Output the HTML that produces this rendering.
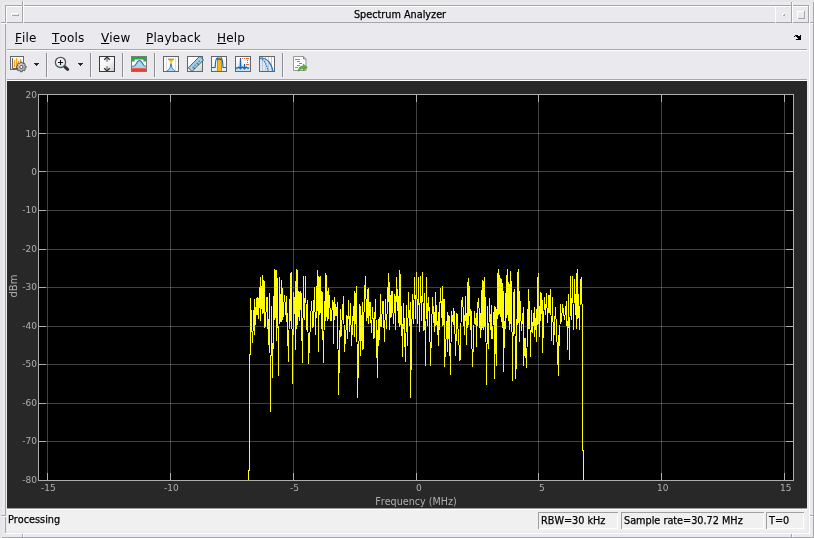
<!DOCTYPE html>
<html><head><meta charset="utf-8"><title>Spectrum Analyzer</title>
<style>
html,body{margin:0;padding:0;background:#eae9ee;overflow:hidden}
#w{position:relative;width:814px;height:538px;background:#eae9ee;overflow:hidden;font-family:"DejaVu Sans","Liberation Sans",sans-serif;font-kerning:none}
#w div{position:absolute}
#w svg{position:absolute}
.t{white-space:nowrap;will-change:transform}
.b{-webkit-text-stroke:0.25px #000}
.lab{font-size:9px;line-height:12px;color:#afafaf}
u{text-decoration:underline;text-underline-offset:1px}
</style></head><body><div id="w">
<div style="left:0px;top:0px;width:814px;height:2px;background:#e6e6e6;"></div><div style="left:0px;top:0px;width:2px;height:538px;background:#e6e6e6;"></div><div style="left:2px;top:537px;width:812px;height:1px;background:#a6a6a6;"></div><div style="left:813px;top:2px;width:1px;height:536px;background:#a6a6a6;"></div><div style="left:5px;top:5px;width:804px;height:1px;background:#a6a6a6;"></div><div style="left:5px;top:5px;width:1px;height:528px;background:#a6a6a6;"></div><div style="left:5px;top:533px;width:805px;height:1px;background:#ffffff;"></div><div style="left:809px;top:6px;width:1px;height:528px;background:#ffffff;"></div><div style="left:22px;top:1px;width:1px;height:5px;background:#a6a6a6;"></div><div style="left:23px;top:1px;width:1px;height:5px;background:#ffffff;"></div><div style="left:1px;top:22px;width:5px;height:1px;background:#a6a6a6;"></div><div style="left:1px;top:23px;width:5px;height:1px;background:#ffffff;"></div><div style="left:791px;top:2px;width:1px;height:4px;background:#a6a6a6;"></div><div style="left:792px;top:2px;width:1px;height:4px;background:#ffffff;"></div><div style="left:810px;top:22px;width:3px;height:1px;background:#a6a6a6;"></div><div style="left:810px;top:23px;width:3px;height:1px;background:#ffffff;"></div><div style="left:1px;top:515px;width:5px;height:1px;background:#a6a6a6;"></div><div style="left:1px;top:516px;width:5px;height:1px;background:#ffffff;"></div><div style="left:22px;top:534px;width:1px;height:3px;background:#a6a6a6;"></div><div style="left:23px;top:534px;width:1px;height:3px;background:#ffffff;"></div><div style="left:810px;top:515px;width:3px;height:1px;background:#a6a6a6;"></div><div style="left:810px;top:516px;width:3px;height:1px;background:#ffffff;"></div><div style="left:791px;top:534px;width:1px;height:3px;background:#a6a6a6;"></div><div style="left:792px;top:534px;width:1px;height:3px;background:#ffffff;"></div><div style="left:6px;top:6px;width:16px;height:1px;background:#ffffff;"></div><div style="left:6px;top:6px;width:1px;height:16px;background:#ffffff;"></div><div style="left:22px;top:6px;width:1px;height:17px;background:#a6a6a6;"></div><div style="left:7px;top:22px;width:16px;height:1px;background:#a6a6a6;"></div><div style="left:11px;top:13px;width:8px;height:1px;background:#ffffff;"></div><div style="left:11px;top:13px;width:1px;height:3px;background:#ffffff;"></div><div style="left:12px;top:15px;width:7px;height:1px;background:#a6a6a6;"></div><div style="left:18px;top:14px;width:1px;height:2px;background:#a6a6a6;"></div><div style="left:23px;top:6px;width:752px;height:1px;background:#ffffff;"></div><div style="left:23px;top:6px;width:1px;height:16px;background:#ffffff;"></div><div style="left:24px;top:22px;width:751px;height:1px;background:#a6a6a6;"></div><div style="left:775px;top:6px;width:16px;height:1px;background:#ffffff;"></div><div style="left:775px;top:6px;width:1px;height:16px;background:#ffffff;"></div><div style="left:776px;top:22px;width:16px;height:1px;background:#a6a6a6;"></div><div style="left:791px;top:6px;width:1px;height:17px;background:#a6a6a6;"></div><div style="left:782px;top:13px;width:3px;height:1px;background:#ffffff;"></div><div style="left:782px;top:13px;width:1px;height:3px;background:#ffffff;"></div><div style="left:783px;top:15px;width:2px;height:1px;background:#a6a6a6;"></div><div style="left:784px;top:14px;width:1px;height:2px;background:#a6a6a6;"></div><div style="left:792px;top:6px;width:16px;height:1px;background:#ffffff;"></div><div style="left:792px;top:6px;width:1px;height:16px;background:#ffffff;"></div><div style="left:793px;top:22px;width:16px;height:1px;background:#a6a6a6;"></div><div style="left:808px;top:6px;width:1px;height:17px;background:#a6a6a6;"></div><div style="left:797px;top:11px;width:7px;height:1px;background:#ffffff;"></div><div style="left:797px;top:11px;width:1px;height:8px;background:#ffffff;"></div><div style="left:798px;top:18px;width:7px;height:1px;background:#a6a6a6;"></div><div style="left:804px;top:11px;width:1px;height:8px;background:#a6a6a6;"></div><div class="t b" style="left:24.5px;top:6.6px;width:750px;height:16px;line-height:16px;text-align:center;font-size:9.7px;color:#000">Spectrum Analyzer</div><div class="t" style="left:15px;top:30px;font-size:12px;line-height:16px;letter-spacing:0.15px;color:#000"><u>F</u>ile</div><div class="t" style="left:52px;top:30px;font-size:12px;line-height:16px;letter-spacing:0.15px;color:#000"><u>T</u>ools</div><div class="t" style="left:101px;top:30px;font-size:12px;line-height:16px;letter-spacing:0.15px;color:#000"><u>V</u>iew</div><div class="t" style="left:146px;top:30px;font-size:12px;line-height:16px;letter-spacing:0.15px;color:#000"><u>P</u>layback</div><div class="t" style="left:217px;top:30px;font-size:12px;line-height:16px;letter-spacing:0.15px;color:#000"><u>H</u>elp</div><div style="left:7px;top:49px;width:800px;height:1px;background:#a8a8ac;"></div><div style="left:7px;top:50px;width:800px;height:1px;background:#ffffff;"></div><div style="left:795px;top:35px;width:3px;height:1px;background:#000;"></div><div style="left:800px;top:35px;width:1px;height:1px;background:#000;"></div><div style="left:794px;top:36px;width:1px;height:1px;background:#000;"></div><div style="left:796px;top:36px;width:5px;height:1px;background:#000;"></div><div style="left:797px;top:37px;width:4px;height:1px;background:#000;"></div><div style="left:798px;top:38px;width:3px;height:1px;background:#000;"></div><div style="left:796px;top:39px;width:5px;height:1px;background:#000;"></div><div style="left:7px;top:79px;width:800px;height:1px;background:#a8a8ac;"></div><div style="left:7px;top:80px;width:800px;height:1px;background:#ffffff;"></div><div style="left:46px;top:53px;width:1px;height:24px;background:#8e8e90;"></div><div style="left:47px;top:53px;width:1px;height:24px;background:#f6f5f8;"></div><div style="left:90px;top:53px;width:1px;height:24px;background:#8e8e90;"></div><div style="left:91px;top:53px;width:1px;height:24px;background:#f6f5f8;"></div><div style="left:122px;top:53px;width:1px;height:24px;background:#8e8e90;"></div><div style="left:123px;top:53px;width:1px;height:24px;background:#f6f5f8;"></div><div style="left:154px;top:53px;width:1px;height:24px;background:#8e8e90;"></div><div style="left:155px;top:53px;width:1px;height:24px;background:#f6f5f8;"></div><div style="left:282px;top:53px;width:1px;height:24px;background:#8e8e90;"></div><div style="left:283px;top:53px;width:1px;height:24px;background:#f6f5f8;"></div><div style="left:34px;top:63px;width:5px;height:1px;background:#2a2a2a;"></div><div style="left:35px;top:64px;width:3px;height:1px;background:#2a2a2a;"></div><div style="left:36px;top:65px;width:1px;height:1px;background:#2a2a2a;"></div><div style="left:78px;top:63px;width:5px;height:1px;background:#2a2a2a;"></div><div style="left:79px;top:64px;width:3px;height:1px;background:#2a2a2a;"></div><div style="left:80px;top:65px;width:1px;height:1px;background:#2a2a2a;"></div><svg style="left:0;top:0" width="814" height="82" viewBox="0 0 814 82">
<defs>
<linearGradient id="gw" x1="0" y1="0" x2="1" y2="1"><stop offset="0" stop-color="#ffffff"/><stop offset="0.55" stop-color="#f4f4f4"/><stop offset="1" stop-color="#c9c9c9"/></linearGradient>
<linearGradient id="gb" x1="0" y1="0" x2="0" y2="1"><stop offset="0" stop-color="#ffffff"/><stop offset="1" stop-color="#dcebf5"/></linearGradient>
<radialGradient id="gg" cx="0.4" cy="0.35" r="0.7"><stop offset="0" stop-color="#dcdcdc"/><stop offset="1" stop-color="#9a9a9a"/></radialGradient>
<radialGradient id="gl" cx="0.4" cy="0.35" r="0.7"><stop offset="0" stop-color="#ffffff"/><stop offset="1" stop-color="#cfe6f2"/></radialGradient>
</defs>
<!-- icon1: scope config -->
<g>
<rect x="10.5" y="56.5" width="13" height="13" fill="url(#gb)" stroke="#666" stroke-width="1"/>
<path d="M12.5 58v10.5h9" fill="none" stroke="#666" stroke-width="1"/>
<g stroke="#f9a11b" stroke-width="1.2"><path d="M14.6 60v7M16.6 58v9M18.6 61v4M20.6 59v4"/></g>
<g transform="translate(21.3,67)">
<path d="M-0.84,-4.83 L0.84,-4.83 L0.93,-3.89 L2.09,-3.41 L2.82,-4.01 L4.01,-2.82 L3.41,-2.09 L3.89,-0.93 L4.83,-0.84 L4.83,0.84 L3.89,0.93 L3.41,2.09 L4.01,2.82 L2.82,4.01 L2.09,3.41 L0.93,3.89 L0.84,4.83 L-0.84,4.83 L-0.93,3.89 L-2.09,3.41 L-2.82,4.01 L-4.01,2.82 L-3.41,2.09 L-3.89,0.93 L-4.83,0.84 L-4.83,-0.84 L-3.89,-0.93 L-3.41,-2.09 L-4.01,-2.82 L-2.82,-4.01 L-2.09,-3.41 L-0.93,-3.89z" fill="url(#gg)" stroke="#444" stroke-width="0.8" stroke-linejoin="round"/>
<circle r="1.6" fill="#fff" stroke="#484848" stroke-width="0.9"/>
</g>
</g>
<!-- icon2: zoom -->
<g>
<path d="M64.6 66.6l3 2.8" stroke="#333" stroke-width="3" stroke-linecap="round"/>
<circle cx="60.5" cy="62.4" r="5.1" fill="url(#gl)" stroke="#555" stroke-width="1.3"/>
<path d="M58 62.5h5M60.5 60v5" stroke="#111" stroke-width="1.1"/>
</g>
<!-- icon3: autoscale -->
<g>
<rect x="99.5" y="56.5" width="15" height="15" fill="url(#gw)" stroke="#3c3c3c" stroke-width="1"/>
<path d="M104.2 59.8l2.8-2.6 2.8 2.6" fill="none" stroke="#333" stroke-width="1.3"/>
<path d="M107 58.5v3.2" stroke="#888" stroke-width="1.6"/>
<path d="M104.2 68.2l2.8 2.6 2.8-2.6" fill="none" stroke="#333" stroke-width="1.3"/>
<path d="M107 66.3v3.2" stroke="#888" stroke-width="1.6"/>
</g>
<!-- icon4: spectral mask -->
<g>
<rect x="131.5" y="56.5" width="15" height="15" fill="#fff" stroke="#7a7a7a" stroke-width="1"/>
<path d="M132 57h14v4.5h-2.6v-2h-8.8v2H132z" fill="#1fae3b"/>
<path d="M132 66.3h1.5c2.8,0 3,-5.800 6,-5.800s3.200,5.800 6,5.800h.5V68H132z" fill="#a9d9ea"/>
<path d="M132 66.3h1.5c2.8,0 3,-5.800 6,-5.800s3.200,5.800 6,5.800h.5" fill="none" stroke="#2a6db5" stroke-width="1.1"/>
<rect x="132" y="66.8" width="14" height="1.4" fill="#9fd4ea"/>
<rect x="132" y="68.2" width="14" height="2.8" fill="#e8402a"/>
</g>
<!-- icon5: peak finder -->
<g>
<rect x="163.5" y="56.5" width="15" height="15" fill="#fff" stroke="#666" stroke-width="1"/>
<path d="M166.5 57v14M175.5 57v14" stroke="#dedede" stroke-width="1"/>
<path d="M167 71c2.5,-1.5 3.3,-3 4,-7.5c.7,4.5 1.5,6 4,7.5z" fill="#b7dcef"/>
<path d="M167 71c2.5,-1.5 3.3,-3 4,-7.5c.7,4.500 1.500,6 4,7.500" fill="none" stroke="#2a6db5" stroke-width="1"/>
<path d="M168.200 59.300h5.600L171 63.500z" fill="#f6c414"/>
<path d="M168 59.200h6" stroke="#b06f1c" stroke-width="1"/>
</g>
<!-- icon6: ruler -->
<g>
<rect x="187.500" y="56.500" width="15" height="15" fill="url(#gw)" stroke="#666" stroke-width="1"/>
<path d="M188.300 67.800L199.800 56.300L203.500 60L192 71.500z" fill="#9dd2f1" stroke="#333" stroke-width="0.8"/>
<g fill="#222"><rect x="192.600" y="66.700" width="1" height="1"/><rect x="194.600" y="64.700" width="1" height="1"/><rect x="196.600" y="62.700" width="1" height="1"/><rect x="198.600" y="60.700" width="1" height="1"/><rect x="193.700" y="67.700" width="1" height="1"/><rect x="197.700" y="63.700" width="1" height="1"/></g>
</g>
<!-- icon7: channel measurements -->
<g>
<rect x="211.500" y="56.500" width="15" height="15" fill="url(#gb)" stroke="#666" stroke-width="1"/>
<rect x="217" y="57" width="5" height="14" fill="#fdb913"/>
<path d="M217.500 57v14M221.500 57v14" stroke="#e5801d" stroke-width="1"/>
<path d="M212 67.500h3.200c.3,-6 .3,-8 1.500,-9l1.200,1.200 1.200,-1.200 1.200,1.200 1.200,-1.200c1.200,1 1.200,3 1.500,9H226" fill="none" stroke="#2364ad" stroke-width="1.100"/>
</g>
<!-- icon8: distortion -->
<g>
<rect x="235.500" y="56.500" width="15" height="15" fill="url(#gb)" stroke="#666" stroke-width="1"/>
<path d="M236 67.500l1,1 1.500,-1.500 1.500,1.500 .5,-10.500 .5,10.500 1.500,-1.500 1.500,1.500 .5,-4.500 .5,4.500 1.500,-1.500 1.500,1.500 1,-1V71H236z" fill="#c5e2f0" stroke="none"/>
<path d="M236 67.500l1,1 1.500,-1.500 1.500,1.500 .5,-10.500 .5,10.500 1.500,-1.500 1.500,1.500 .5,-4.500 .5,4.500 1.500,-1.500 1.500,1.500 1,-1" fill="none" stroke="#2364ad" stroke-width="1.100"/>
<g fill="#d0622a"><rect x="242" y="58" width="1" height="1"/><rect x="244" y="58" width="1" height="1"/><rect x="246" y="58" width="3" height="1"/><rect x="247" y="60" width="1" height="1"/><rect x="247" y="62" width="1" height="1"/><rect x="246" y="64" width="3" height="1"/></g>
</g>
<!-- icon9: ccdf -->
<g>
<rect x="259.500" y="56.500" width="15" height="15" fill="#fff" stroke="#666" stroke-width="1"/>
<path d="M260 58h2.500c5,1 9,6 10.500,13H260z" fill="#d6e9f8"/>
<path d="M262.500 57v14M265.500 57v14M268.500 57v14M271.500 57v14" stroke="#c8c8c8" stroke-width="1"/>
<path d="M260 58h2.500c5,1 9,6 10.500,13" fill="none" stroke="#1f6fc0" stroke-width="1.200"/>
<path d="M260 58.500c4,0.500 7,6 8,12.500" fill="none" stroke="#1f6fc0" stroke-width="1.200" stroke-dasharray="1.500 1"/>
</g>
<!-- icon10: export -->
<g>
<path d="M293.500 56.500h10l2.500 2.500v11.500h-12.500z" fill="#fdfdfd" stroke="#9a9a9a" stroke-width="1"/>
<path d="M303.500 56.500v2.500h2.500" fill="none" stroke="#8a8a8a" stroke-width="1"/>
<g stroke="#8a8a8a" stroke-width="1"><path d="M295 59.500h5M297 61.500h3M299 63.500h3M297 65.500h3M295 67.500h3"/></g>
<path d="M298.300 71.300c0,-3.500 2,-5.300 5,-5.300v-1.800l4 3.200-4 3.200v-1.800c-2,0 -3.500,.5 -5,2.500z" fill="#5db12f" stroke="#3c8a1e" stroke-width="0.600"/>
</g>
</svg>
<div style="left:7px;top:81px;width:800px;height:427px;background:#282828;"></div><svg style="position:absolute;left:0;top:0" width="814" height="538" viewBox="0 0 814 538" shape-rendering="crispEdges">
<rect x="38" y="94" width="756" height="387" fill="#000"/>
<path d="M248.5,480 L248.5,470 L249.5,470 L249.5,354 L250.5,354 L250.5,298 L252.5,342.5 L254.5,299 L254.5,335 L256.5,298 L257,315 L258,297.5 L258.5,318.5 L260.5,277 L260.5,321 L262.5,275 L263,313.5 L264,280 L265,327.5 L267,297 L268.5,345 L269.5,293 L270.5,411.5 L271.5,306 L272.5,377.5 L274.5,269 L275,319.5 L276,270 L276.5,341 L277.5,278.5 L278.5,376 L279.5,277 L280,322.5 L281.5,280 L282,322 L282.5,288 L283,317.5 L284.5,295 L286.5,321.5 L286.5,296 L288.5,361.5 L289.5,299 L290.5,320.5 L291,273 L291.5,272.5 L292.5,383.5 L293.5,292 L294.5,314 L295.5,281 L295.5,350 L296.5,269 L297,328.5 L297.5,270 L298.5,316.5 L299,291 L299.5,320.5 L301,291 L301.5,340.5 L302,321.5 L302.5,363 L303.5,276.5 L304.5,320 L305.5,276 L306.5,329.5 L307.5,300 L308.5,364 L311.5,301 L313,328 L314.5,287 L315.5,335 L317.5,270 L318.5,351.5 L319,276.5 L320,314.5 L320.5,276 L321.5,328.5 L322,291 L323.5,363 L324.5,301.5 L325,323.5 L325.5,273.5 L326,319.5 L326.5,275 L328,321 L328.5,288 L331,321 L333,300 L333.5,344 L334.5,297 L336,316 L337.5,302 L338.5,395 L340.5,309 L341,336.5 L343.5,296 L344.5,351.5 L347,315.5 L347.5,339 L348.5,300 L349.5,331.5 L350.5,303 L351.5,345.5 L353.5,306 L354.5,336.5 L355,291 L355.5,323.5 L356.5,286 L357.5,397.5 L360,304 L360.5,355.5 L362.5,302 L363,349.5 L364.5,294.5 L365.5,276 L366.5,320.5 L367.5,289 L368,318 L368.5,288 L368.5,323.5 L370,302 L371.5,333 L372.5,307 L374,339 L375.5,299 L377.5,377.5 L378,330.5 L378.5,345.5 L379,319 L379.5,339.5 L380.5,294 L381,327 L383,301 L384.5,341.5 L385.5,299.5 L386.5,328.5 L388.5,273.5 L389.5,330 L389.5,282.5 L391,318 L392,291 L393.5,323.5 L395,294 L395.5,329.5 L396.5,277 L398.5,322.5 L399.5,270 L400,327 L400.5,274.5 L401.5,335.5 L402,322.5 L402.5,356.5 L403.5,303 L405.5,361.5 L406.5,305.5 L407.5,345.5 L408.5,292 L409.5,325.5 L410.5,302 L410.5,397.5 L412.5,294.5 L413.5,323.5 L414.5,277 L415.5,318.5 L416.5,272 L417.5,324 L418.5,277 L419.5,331.5 L420.5,276 L421.5,321 L422.5,272 L423.5,331 L424.5,293 L425.5,366 L426.5,277 L427.5,325.5 L428.5,297.5 L429.5,316 L430.5,366 L432.5,297.5 L434.5,331.5 L435.5,292 L436,326 L436.5,305 L437.5,335 L438.5,312 L438.5,345.5 L440.5,288 L441.5,317.5 L442.5,286 L443,325.5 L444,299.5 L444.5,367 L447.5,312 L447.5,351.5 L449,315.5 L450.5,375 L451.5,311 L452.5,321.5 L453.5,308.5 L454,324.5 L454.5,311 L455.5,355.5 L457,313.5 L460,360.5 L461.5,304 L462.5,297 L464.5,335 L465.5,296 L466.5,345 L467.5,282 L468,327.5 L468.5,278 L469,317 L469.5,286 L470.5,329.5 L471,310 L472.5,367 L474.5,311 L475.5,325 L476.5,313.5 L476.5,346.5 L477.5,306.5 L478.5,298 L480.5,337.5 L481.5,290.5 L482,329.5 L483,280 L484,329.5 L484.5,277 L485,320.5 L485.5,297 L486.5,385 L487.5,306 L488.5,349 L489.5,298 L490.5,329.5 L491.5,305 L492,339 L494.5,306 L494.5,378.5 L496,307.5 L496.5,366 L497.5,277 L498.5,269 L499,315 L499.5,275.5 L500.5,316.5 L501,278.5 L502,321.5 L502.5,283 L503.5,372 L503.5,291 L504.5,347.5 L506.5,275 L507,317.5 L507.5,269 L508.5,320.5 L509,282 L509.5,330 L510.5,271 L511,323.5 L511.5,281.5 L512.5,380.5 L513.5,295 L514.5,289 L515.5,378.5 L516,339.5 L516.5,368.5 L517.5,272 L518,324.5 L518.5,269 L519.5,341.5 L519.5,291 L521.5,330.5 L523.5,307 L523.5,366 L525,338 L526.5,367.5 L528.5,289 L529,328.5 L529.5,301 L530.5,356.5 L531.5,310 L532.5,332.5 L534.5,307 L534.5,336.5 L535.5,318.5 L536.5,341.5 L537.5,277.5 L538,324.5 L538.5,273.5 L539.5,336.5 L541,292 L541.5,313.5 L542,300 L542.5,352.5 L544.5,297 L545.5,315 L546.5,293 L547.5,322.5 L549,295 L550,313 L550.5,289 L551.5,340.5 L552.5,297 L553.5,345 L555.5,307 L558.5,376 L559,335.5 L559.5,345.5 L560.5,304 L561.5,321.5 L562.5,304.5 L564.5,319.5 L566.5,301 L567.5,349.5 L568.5,294.5 L569.5,360 L570.5,276 L571.5,320 L572.5,276 L573.5,329.5 L574.5,279.5 L575.5,315 L576.5,273.5 L576.5,328.5 L577.5,269 L578,319 L578.5,294.5 L579.5,330 L580.5,282 L581.5,277 L582.5,329 L582.5,450 L583.5,450 L583.5,480" fill="none" stroke="#ffff00" stroke-width="1" stroke-linejoin="miter" shape-rendering="crispEdges"/>
<rect x="47" y="94" width="1" height="386" fill="rgba(175,175,175,0.37)"/>
<rect x="170" y="94" width="1" height="386" fill="rgba(175,175,175,0.37)"/>
<rect x="293" y="94" width="1" height="386" fill="rgba(175,175,175,0.37)"/>
<rect x="416" y="94" width="1" height="386" fill="rgba(175,175,175,0.37)"/>
<rect x="538" y="94" width="1" height="386" fill="rgba(175,175,175,0.37)"/>
<rect x="661" y="94" width="1" height="386" fill="rgba(175,175,175,0.37)"/>
<rect x="784" y="94" width="1" height="386" fill="rgba(175,175,175,0.37)"/>
<rect x="38" y="133" width="755" height="1" fill="rgba(175,175,175,0.37)"/>
<rect x="38" y="171" width="755" height="1" fill="rgba(175,175,175,0.37)"/>
<rect x="38" y="210" width="755" height="1" fill="rgba(175,175,175,0.37)"/>
<rect x="38" y="249" width="755" height="1" fill="rgba(175,175,175,0.37)"/>
<rect x="38" y="287" width="755" height="1" fill="rgba(175,175,175,0.37)"/>
<rect x="38" y="326" width="755" height="1" fill="rgba(175,175,175,0.37)"/>
<rect x="38" y="364" width="755" height="1" fill="rgba(175,175,175,0.37)"/>
<rect x="38" y="403" width="755" height="1" fill="rgba(175,175,175,0.37)"/>
<rect x="38" y="441" width="755" height="1" fill="rgba(175,175,175,0.37)"/>
<rect x="47" y="94" width="1" height="8" fill="#afafaf"/>
<rect x="47" y="473" width="1" height="8" fill="#afafaf"/>
<rect x="170" y="94" width="1" height="8" fill="#afafaf"/>
<rect x="170" y="473" width="1" height="8" fill="#afafaf"/>
<rect x="293" y="94" width="1" height="8" fill="#afafaf"/>
<rect x="293" y="473" width="1" height="8" fill="#afafaf"/>
<rect x="416" y="94" width="1" height="8" fill="#afafaf"/>
<rect x="416" y="473" width="1" height="8" fill="#afafaf"/>
<rect x="538" y="94" width="1" height="8" fill="#afafaf"/>
<rect x="538" y="473" width="1" height="8" fill="#afafaf"/>
<rect x="661" y="94" width="1" height="8" fill="#afafaf"/>
<rect x="661" y="473" width="1" height="8" fill="#afafaf"/>
<rect x="784" y="94" width="1" height="8" fill="#afafaf"/>
<rect x="784" y="473" width="1" height="8" fill="#afafaf"/>
<rect x="38" y="133" width="8" height="1" fill="#afafaf"/>
<rect x="786" y="133" width="8" height="1" fill="#afafaf"/>
<rect x="38" y="171" width="8" height="1" fill="#afafaf"/>
<rect x="786" y="171" width="8" height="1" fill="#afafaf"/>
<rect x="38" y="210" width="8" height="1" fill="#afafaf"/>
<rect x="786" y="210" width="8" height="1" fill="#afafaf"/>
<rect x="38" y="249" width="8" height="1" fill="#afafaf"/>
<rect x="786" y="249" width="8" height="1" fill="#afafaf"/>
<rect x="38" y="287" width="8" height="1" fill="#afafaf"/>
<rect x="786" y="287" width="8" height="1" fill="#afafaf"/>
<rect x="38" y="326" width="8" height="1" fill="#afafaf"/>
<rect x="786" y="326" width="8" height="1" fill="#afafaf"/>
<rect x="38" y="364" width="8" height="1" fill="#afafaf"/>
<rect x="786" y="364" width="8" height="1" fill="#afafaf"/>
<rect x="38" y="403" width="8" height="1" fill="#afafaf"/>
<rect x="786" y="403" width="8" height="1" fill="#afafaf"/>
<rect x="38" y="441" width="8" height="1" fill="#afafaf"/>
<rect x="786" y="441" width="8" height="1" fill="#afafaf"/>
<rect x="38" y="94" width="756" height="1" fill="#afafaf"/>
<rect x="38" y="480" width="756" height="1" fill="#afafaf"/>
<rect x="38" y="94" width="1" height="387" fill="#afafaf"/>
<rect x="793" y="94" width="1" height="387" fill="#afafaf"/>
</svg><div class="t lab" style="left:0;width:37px;top:89px;text-align:right">20</div><div class="t lab" style="left:0;width:37px;top:128px;text-align:right">10</div><div class="t lab" style="left:0;width:37px;top:166px;text-align:right">0</div><div class="t lab" style="left:0;width:37px;top:204px;text-align:right">-10</div><div class="t lab" style="left:0;width:37px;top:243px;text-align:right">-20</div><div class="t lab" style="left:0;width:37px;top:281px;text-align:right">-30</div><div class="t lab" style="left:0;width:37px;top:320px;text-align:right">-40</div><div class="t lab" style="left:0;width:37px;top:358px;text-align:right">-50</div><div class="t lab" style="left:0;width:37px;top:397px;text-align:right">-60</div><div class="t lab" style="left:0;width:37px;top:435px;text-align:right">-70</div><div class="t lab" style="left:0;width:37px;top:474px;text-align:right">-80</div><div class="t lab" style="left:41px;top:482px">-15</div><div class="t lab" style="left:164px;top:482px">-10</div><div class="t lab" style="left:290px;top:482px">-5</div><div class="t lab" style="left:416px;top:482px">0</div><div class="t lab" style="left:539px;top:482px">5</div><div class="t lab" style="left:657px;top:482px">10</div><div class="t lab" style="left:780px;top:482px">15</div><div class="t" style="left:366px;width:100px;top:496px;height:12px;overflow:hidden;text-align:center;font-size:9.6px;line-height:12px;color:#afafaf">Frequency (MHz)</div><div class="t" style="left:-6px;top:279.5px;width:40px;height:12px;text-align:center;font-size:10px;line-height:12px;color:#afafaf;transform:rotate(-90deg)">dBm</div><div style="left:7px;top:508px;width:800px;height:1px;background:#a0a0a0;"></div><div style="left:7px;top:509px;width:800px;height:1px;background:#ffffff;"></div><div style="left:7px;top:510px;width:800px;height:21px;background:#f0f0f0;"></div><div class="t b" style="left:8.4px;top:512.6px;font-size:9.7px;line-height:14px;color:#000">Processing</div><div style="left:538px;top:512px;width:80px;height:1px;background:#a0a0a0;"></div><div style="left:538px;top:512px;width:1px;height:17px;background:#a0a0a0;"></div><div style="left:539px;top:528px;width:79px;height:1px;background:#ffffff;"></div><div style="left:617px;top:513px;width:1px;height:16px;background:#ffffff;"></div><div class="t b" style="left:541px;top:513.6px;font-size:9.7px;line-height:14px;color:#000">RBW=30 kHz</div><div style="left:621px;top:512px;width:143px;height:1px;background:#a0a0a0;"></div><div style="left:621px;top:512px;width:1px;height:17px;background:#a0a0a0;"></div><div style="left:622px;top:528px;width:142px;height:1px;background:#ffffff;"></div><div style="left:763px;top:513px;width:1px;height:16px;background:#ffffff;"></div><div class="t b" style="left:624px;top:513.6px;font-size:9.7px;line-height:14px;color:#000">Sample rate=30.72 MHz</div><div style="left:766px;top:512px;width:38px;height:1px;background:#a0a0a0;"></div><div style="left:766px;top:512px;width:1px;height:17px;background:#a0a0a0;"></div><div style="left:767px;top:528px;width:37px;height:1px;background:#ffffff;"></div><div style="left:803px;top:513px;width:1px;height:16px;background:#ffffff;"></div><div class="t b" style="left:769px;top:513.6px;font-size:9.7px;line-height:14px;color:#000">T=0</div>
</div></body></html>
